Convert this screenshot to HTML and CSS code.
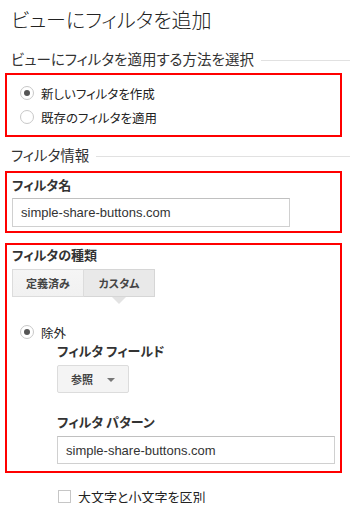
FILE: index.html
```html
<!DOCTYPE html>
<html lang="ja">
<head>
<meta charset="utf-8">
<link rel="stylesheet" href="styles.css">
</head>
<body>
<div class="page">
  <h1 class="title">ビューにフィルタを追加</h1>

  <div class="section-head"><span class="section-text">ビューにフィルタを適用する方法を選択</span><span class="rule"></span></div>

  <div class="box box-method">
    <div class="radio-row"><span class="radio checked"></span><span class="radio-label">新しいフィルタを作成</span></div>
    <div class="radio-row"><span class="radio"></span><span class="radio-label">既存のフィルタを適用</span></div>
  </div>

  <div class="section-head section-info"><span class="section-text">フィルタ情報</span><span class="rule"></span></div>

  <div class="box box-name">
    <div class="label">フィルタ名</div>
    <div class="input input-name">simple-share-buttons.com</div>
  </div>

  <div class="box box-type">
    <div class="label">フィルタの種類</div>
    <div class="tabs">
      <div class="tab">定義済み</div>
      <div class="tab selected">カスタム</div>
    </div>
    <div class="radio-row exclude-row"><span class="radio checked"></span><span class="radio-label">除外</span></div>
    <div class="indent">
      <div class="label">フィルタ フィールド</div>
      <div class="dropdown"><span class="dropdown-text">参照</span><span class="caret"></span></div>
      <div class="label pattern-label">フィルタ パターン</div>
      <div class="input input-pattern">simple-share-buttons.com</div>
    </div>
  </div>

  <div class="check-row"><span class="checkbox"></span><span class="check-label">大文字と小文字を区別</span></div>
</div>
</body>
</html>
```

FILE: styles.css
```css
html, body {
  margin: 0;
  padding: 0;
  background: #fff;
}
body {
  font-family: "Noto Sans CJK JP", "Liberation Sans", sans-serif;
  color: #222;
  font-feature-settings: "palt";
}
.page {
  width: 337px;
  padding: 0 8px 0 5px;
}
.title {
  margin: 0;
  padding-left: 6px;
  height: 42px;
  line-height: 40px;
  font-size: 20px;
  font-weight: 300;
  color: #222;
}
.section-head {
  display: flex;
  align-items: center;
  height: 26px;
  margin: 4px -8px 1px 0;
  padding-left: 6px;
}
.section-text {
  font-size: 14.5px;
  color: #333;
  line-height: 26px;
  white-space: nowrap;
}
.rule {
  flex: 1;
  height: 1px;
  background: #e1e1e1;
  margin-left: 7px;
  margin-top: 2px;
}
.section-info {
  margin: 5px -8px 3px 0;
}
.box {
  border: 2px solid #f00;
}
.box-method {
  padding: 6px 0 6px 13px;
}
.radio-row {
  display: flex;
  align-items: center;
  height: 24px;
}
.radio {
  box-sizing: border-box;
  width: 14px;
  height: 14px;
  border: 1px solid #c8c8c8;
  border-radius: 50%;
  background: #fff;
  display: flex;
  align-items: center;
  justify-content: center;
  margin-right: 7px;
}
.radio.checked::after {
  content: "";
  width: 6px;
  height: 6px;
  border-radius: 50%;
  background: #555;
}
.radio-label {
  font-size: 12.5px;
  color: #222;
}
.box-name {
  padding: 3px 5px 4px 5px;
}
.label {
  font-size: 13px;
  font-weight: bold;
  color: #333;
  line-height: 18px;
  height: 18px;
}
.input {
  box-sizing: border-box;
  border: 1px solid #d0d0d0;
  border-top-color: #c0c0c0;
  font-family: "Liberation Sans", Arial, sans-serif;
  font-size: 13px;
  color: #333;
  display: flex;
  align-items: center;
  padding-left: 8px;
}
.input-name {
  margin-top: 4px;
  width: 278px;
  height: 29px;
}
.box-type {
  margin-top: 10px;
  padding: 1px 7px 7px 5px;
}
.tabs {
  display: flex;
  margin-top: 5px;
  width: 143px;
}
.tab {
  box-sizing: border-box;
  height: 28px;
  display: flex;
  align-items: center;
  justify-content: center;
  font-size: 11px;
  font-weight: bold;
  color: #444;
  background: linear-gradient(#f5f5f5, #f1f1f1);
  border: 1px solid #dcdcdc;
  width: 72px;
}
.tab + .tab {
  border-left: none;
  width: 71px;
}
.tab.selected {
  background: #e9e9e9;
  border-color: #d6d6d6;
  position: relative;
}
.tab.selected::after {
  content: "";
  position: absolute;
  left: 28px;
  top: 27px;
  border-left: 7px solid transparent;
  border-right: 7px solid transparent;
  border-top: 7px solid #e3e3e3;
}
.exclude-row {
  margin: 25px 0 0 8px;
  height: 20px;
}
.indent {
  padding-left: 45px;
}
.dropdown {
  box-sizing: border-box;
  margin-top: 5px;
  width: 72px;
  height: 28px;
  background: #f4f4f4;
  border: 1px solid #dcdcdc;
  border-radius: 2px;
  display: flex;
  align-items: center;
  padding-left: 13px;
}
.dropdown-text {
  font-size: 11px;
  font-weight: bold;
  color: #444;
}
.caret {
  margin-left: 14px;
  margin-top: 2px;
  border-left: 4px solid transparent;
  border-right: 4px solid transparent;
  border-top: 4px solid #777;
}
.pattern-label {
  margin-top: 20px;
}
.input-pattern {
  margin-top: 5px;
  width: 278px;
  height: 28px;
}
.check-row {
  display: flex;
  align-items: center;
  margin: 16px 0 0 53px;
  height: 14px;
}
.checkbox {
  box-sizing: border-box;
  width: 13px;
  height: 13px;
  border: 1px solid #c6c6c6;
  background: #fff;
  margin-right: 7px;
}
.check-label {
  font-size: 13px;
  color: #222;
}
```
